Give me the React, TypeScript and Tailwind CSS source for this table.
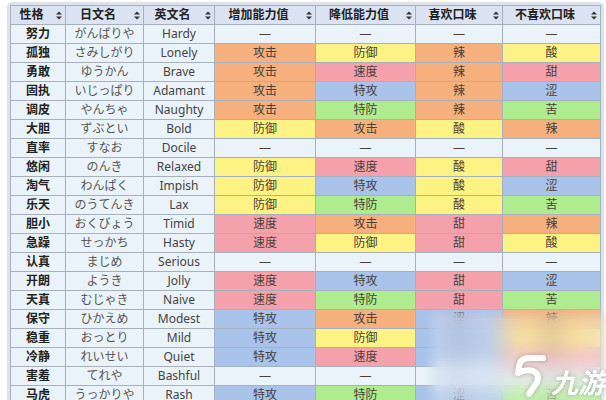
import React from "react";

type Stat = "攻击" | "防御" | "速度" | "特攻" | "特防" | "—";
type Taste = "辣" | "酸" | "甜" | "涩" | "苦" | "—";

const natures: [string, string, string, Stat, Stat, Taste, Taste][] = [
  ["努力", "がんばりや", "Hardy", "—", "—", "—", "—"],
  ["孤独", "さみしがり", "Lonely", "攻击", "防御", "辣", "酸"],
  ["勇敢", "ゆうかん", "Brave", "攻击", "速度", "辣", "甜"],
  ["固执", "いじっぱり", "Adamant", "攻击", "特攻", "辣", "涩"],
  ["调皮", "やんちゃ", "Naughty", "攻击", "特防", "辣", "苦"],
  ["大胆", "ずぶとい", "Bold", "防御", "攻击", "酸", "辣"],
  ["直率", "すなお", "Docile", "—", "—", "—", "—"],
  ["悠闲", "のんき", "Relaxed", "防御", "速度", "酸", "甜"],
  ["淘气", "わんぱく", "Impish", "防御", "特攻", "酸", "涩"],
  ["乐天", "のうてんき", "Lax", "防御", "特防", "酸", "苦"],
  ["胆小", "おくびょう", "Timid", "速度", "攻击", "甜", "辣"],
  ["急躁", "せっかち", "Hasty", "速度", "防御", "甜", "酸"],
  ["认真", "まじめ", "Serious", "—", "—", "—", "—"],
  ["开朗", "ようき", "Jolly", "速度", "特攻", "甜", "涩"],
  ["天真", "むじゃき", "Naive", "速度", "特防", "甜", "苦"],
  ["保守", "ひかえめ", "Modest", "特攻", "攻击", "涩", "辣"],
  ["稳重", "おっとり", "Mild", "特攻", "防御", "涩", "酸"],
  ["冷静", "れいせい", "Quiet", "特攻", "速度", "涩", "甜"],
  ["害羞", "てれや", "Bashful", "—", "—", "—", "—"],
  ["马虎", "うっかりや", "Rash", "特攻", "特防", "涩", "苦"],
];

const headers = ["性格", "日文名", "英文名", "增加能力值", "降低能力值", "喜欢口味", "不喜欢口味"];

const cellColor = (v: string) => {
  switch (v) {
    case "攻击":
    case "辣":
      return "bg-[#f6b07d]";
    case "防御":
    case "酸":
      return "bg-[#fcf384]";
    case "速度":
    case "甜":
      return "bg-[#f5a1ac]";
    case "特攻":
    case "涩":
      return "bg-[#a9c3ea]";
    case "特防":
    case "苦":
      return "bg-[#afeb8f]";
    default:
      return "bg-[#e9f3f9]";
  }
};

const SortIcon = () => (
  <svg width="6" height="9" viewBox="0 0 6 9" className="shrink-0">
    <polygon points="0,3.6 3,0.4 6,3.6" fill="#333" />
    <polygon points="0,5.4 6,5.4 3,8.6" fill="#333" />
  </svg>
);

const App: React.FC = () => {
  return (
    <div className="w-[606px] h-[400px] overflow-hidden bg-white relative font-['Noto_Sans','Noto_Sans_CJK_SC',sans-serif]">
      <div className="ml-[7px] mt-[2px] w-[597px] h-[398px] bg-[#dde3ec] rounded-t-[5px] pt-[3px] pl-[3px]">
        <div className="grid grid-cols-[54px_77px_70px_100px_99px_86px_97px] gap-px p-px bg-[#a7b1be] w-max text-[12px]">
          {headers.map((h) => (
            <div key={h} className="h-[18px] flex items-center gap-[4px] pr-[3px] bg-[#dbe3f3]">
              <span className="flex-1 text-center font-bold text-[#222] leading-[18px]">{h}</span>
              <SortIcon />
            </div>
          ))}
          {natures.map((n) => (
            <React.Fragment key={n[2]}>
              <div className="h-[18px] leading-[18px] text-center font-bold text-[#222] bg-[#e9f3f9]">{n[0]}</div>
              <div className="h-[18px] leading-[18px] text-center text-[#555] bg-[#e9f3f9]">{n[1]}</div>
              <div className="h-[18px] leading-[18px] text-center text-[#444] bg-[#e9f3f9]">{n[2]}</div>
              {n.slice(3).map((v, i) => (
                <div key={i} className={`h-[18px] leading-[18px] text-center text-[#4a4038] ${cellColor(v)}`}>
                  {v}
                </div>
              ))}
            </React.Fragment>
          ))}
        </div>
      </div>

      {/* 九游 watermark */}
      <div className="absolute left-[424px] top-[306px] w-[182px] h-[94px] backdrop-blur-[11px] bg-white/20 [mask-image:linear-gradient(to_right,transparent,#000_14px),linear-gradient(to_bottom,transparent,#000_14px)] [mask-composite:intersect] flex items-end justify-end gap-[4px] pb-[3px] pr-[1px]">
        <svg width="36" height="45" viewBox="0 0 36 45" className="drop-shadow-[0_0_2px_rgba(0,0,0,0.25)]">
          <path
            d="M32 6 L18 6 Q9 6 8 15 L7 21 Q15 17 22 19 Q29 22 26 30 L18 42"
            fill="none"
            stroke="#fff"
            strokeWidth="6"
            strokeLinecap="round"
            strokeLinejoin="round"
          />
        </svg>
        <span className="text-[27px] leading-[30px] font-bold italic text-white drop-shadow-[0_0_2px_rgba(0,0,0,0.25)] font-['Noto_Sans_CJK_SC',sans-serif]">
          九游
        </span>
      </div>
    </div>
  );
};

export default App;
